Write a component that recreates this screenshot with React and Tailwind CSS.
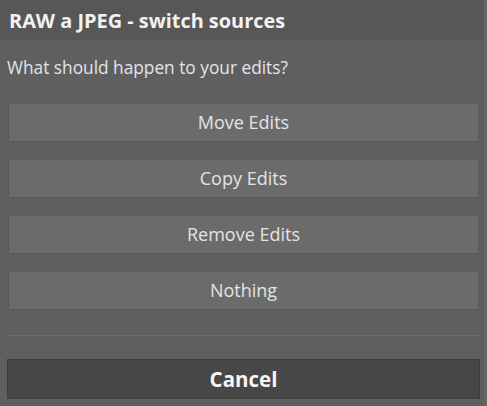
export default function App() {
  const font = { fontFamily: '"Open Sans", "Noto Sans", sans-serif' };
  const opts = ["Move Edits", "Copy Edits", "Remove Edits", "Nothing"];
  return (
    <div className="w-[487px] h-[406px] bg-[#5f5f5f] flex flex-col overflow-hidden border-r-[3px] border-[#666666]" style={font}>
      <div className="h-[40px] bg-[#575757] flex items-center pl-[9px] pt-[1px] text-[19.9px] font-bold text-[#f2f2f2]">
        RAW a JPEG - switch sources
      </div>
      <div className="pl-[7px] pt-[17px] h-[22px] box-content text-[17.3px] leading-[22px] text-[#e2e4ea]">
        What should happen to your edits?
      </div>
      <div className="flex flex-col gap-[17px] mt-[24px] pl-[8px] pr-[5px]">
        {opts.map((o) => (
          <div
            key={o}
            className="h-[39px] bg-[#6b6b6b] border border-[#5a5a5a] flex items-center justify-center text-[18px] text-[#e4e4e4]"
          >
            {o}
          </div>
        ))}
      </div>
      <div className="mt-[25px] ml-[7px] mr-[4px] h-[1px] bg-[#6c6c6c]" />
      <div className="mt-[23px] ml-[7px] mr-[4px] h-[40px] bg-[#474747] border border-[#3e3e3e] flex items-center justify-center text-[20.5px] font-bold text-[#f4f4f4]">
        Cancel
      </div>
    </div>
  );
}
